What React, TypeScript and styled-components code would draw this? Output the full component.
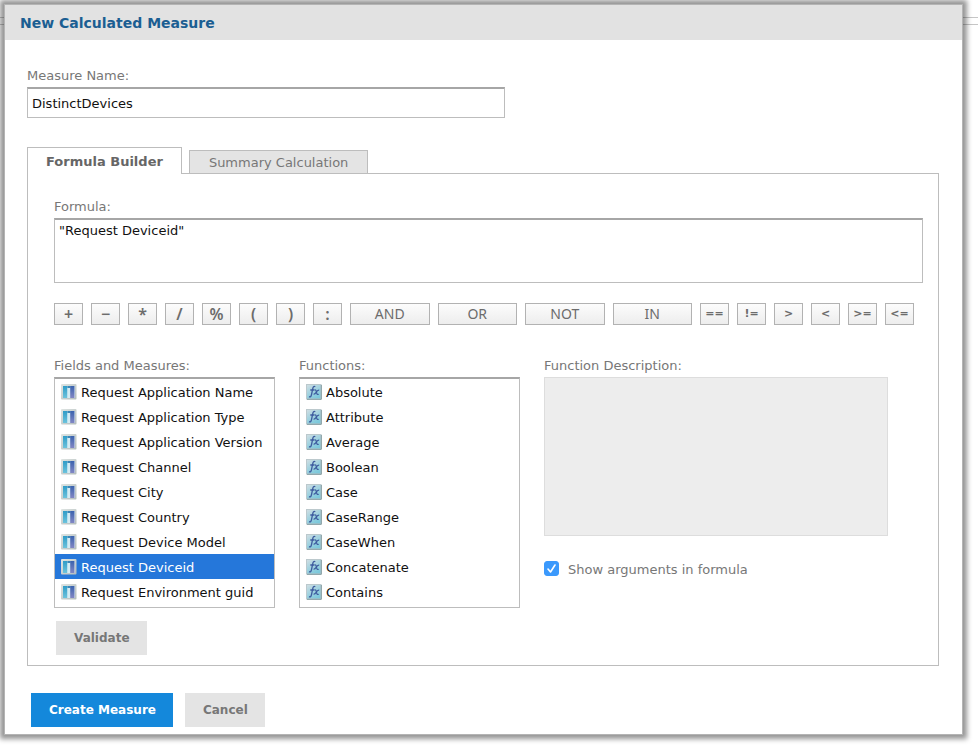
import React, { useState } from "react";
import styled, { createGlobalStyle, css } from "styled-components";

const GlobalStyle = createGlobalStyle`
  *, *::before, *::after { box-sizing: border-box; }
  body { margin: 0; background: #fff; }
  body, button, input, textarea {
    font-family: "DejaVu Sans", Verdana, sans-serif;
    font-size: 13px;
  }
`;

const Page = styled.div`
  position: relative;
  min-height: 100vh;
  padding: 5px 16px 12px 5px;
  overflow: hidden;
`;

const BackgroundRail = styled.div`
  position: absolute;
  top: 17px;
  left: 0;
  right: 0;
  height: 8px;
  border-top: 1px solid #c6c6c6;
  border-bottom: 1px solid #c6c6c6;
`;

const Dialog = styled.section`
  position: relative;
  background: #fff;
  box-shadow: 0 0 0 1px #b4b4b4, 0 0 5px 5px rgba(0, 0, 0, 0.42);
`;

const DialogHeader = styled.header`
  display: flex;
  align-items: center;
  height: 35px;
  padding: 0 15px;
  background: #e2e2e2;
`;

const Title = styled.h1`
  margin: 0;
  font-size: 14px;
  line-height: 18px;
  color: #1b5e92;
`;

const DialogBody = styled.div`
  padding: 27px 23px 7px 22px;
`;

const FieldLabel = styled.label`
  display: block;
  height: 20px;
  line-height: 18px;
  color: #777;
`;

const boxBorder = css`
  border: 1px solid #bdbdbd;
  border-top: 2px solid #a6a6a6;
  border-radius: 0;
  background: #fff;
`;

const NameInput = styled.input`
  ${boxBorder}
  display: block;
  width: 478px;
  max-width: 100%;
  height: 31px;
  padding: 0 4px;
  color: #111;
  outline: none;
`;

const TabList = styled.div`
  display: flex;
  align-items: flex-end;
  gap: 7px;
  height: 26px;
  margin-top: 29px;
`;

const Tab = styled.button<{ $active: boolean }>`
  position: relative;
  z-index: ${(p) => (p.$active ? 1 : 0)};
  height: ${(p) => (p.$active ? "27px" : "23px")};
  margin-bottom: ${(p) => (p.$active ? "-1px" : "0")};
  padding: ${(p) => (p.$active ? "0 18px" : "0 19px")};
  border: 1px solid #bdbdbd;
  border-bottom: 0;
  background: ${(p) => (p.$active ? "#fff" : "#e4e4e4")};
  color: ${(p) => (p.$active ? "#666" : "#777")};
  font-weight: ${(p) => (p.$active ? "bold" : "normal")};
`;

const Panel = styled.div`
  padding: 24px 15px 10px 26px;
  border: 1px solid #bdbdbd;
`;

const FormulaInput = styled.textarea`
  ${boxBorder}
  display: block;
  width: 100%;
  height: 65px;
  padding: 2px 4px;
  color: #111;
  font-size: 13px;
  line-height: 18px;
  resize: none;
  outline: none;
`;

const Operators = styled.div`
  display: flex;
  gap: 8px;
  margin: 20px 9px 0 0;
`;

const symbolText = css`
  font-family: "Noto Sans", "Lucida Grande", sans-serif;
  font-size: 16px;
  font-weight: 600;
`;

const wordText = css`
  font-family: "Noto Sans", "Lucida Grande", sans-serif;
  font-size: 14px;
  font-weight: 400;
`;

const compareText = css`
  font-size: 11px;
  font-weight: 700;
`;

const OperatorButton = styled.button<{ $kind: "symbol" | "word" | "compare" }>`
  flex: ${(p) => (p.$kind === "word" ? "1 1 0" : "0 0 29px")};
  height: 22px;
  padding: 0;
  border: 1px solid #b2b2b2;
  background: linear-gradient(#fcfcfc, #ededed);
  color: #6c6c6c;
  line-height: 20px;
  ${(p) => ({ symbol: symbolText, word: wordText, compare: compareText })[p.$kind]}
`;

const Columns = styled.div`
  display: grid;
  grid-template-columns: 221px 221px minmax(0, 344px);
  gap: 24px;
  margin-top: 32px;
`;

const List = styled.ul`
  ${boxBorder}
  height: 231px;
  margin: 0;
  padding: 0;
  overflow: hidden;
  list-style: none;
`;

const ListItem = styled.li<{ $selected: boolean }>`
  display: flex;
  align-items: center;
  gap: 4px;
  height: 25px;
  padding-left: 6px;
  background: ${(p) => (p.$selected ? "#2577da" : "transparent")};
  color: ${(p) => (p.$selected ? "#fff" : "#111")};
  white-space: nowrap;
  cursor: default;
`;

const ItemText = styled.span`
  padding-top: 2px;
`;

const Description = styled.div`
  height: 159px;
  border: 1px solid #ddd;
  background: #ededed;
`;

const CheckRow = styled.label`
  display: flex;
  align-items: center;
  gap: 8px;
  margin-top: 23px;
  line-height: 18px;
  color: #777;
`;

const CheckHolder = styled.span`
  display: grid;
  width: 16px;
  height: 16px;
  > * { grid-area: 1 / 1; }
  > svg { pointer-events: none; }
`;

const CheckInput = styled.input`
  appearance: none;
  width: 15px;
  height: 15px;
  margin: 0;
  border: 1px solid #3b99fc;
  border-radius: 3px;
  background: #fff;
  &:checked { background: #3b99fc; }
  &:not(:checked) + svg { display: none; }
`;

const ActionButton = styled.button<{ $primary?: boolean }>`
  height: 34px;
  padding: 0 17px 0 18px;
  border: 0;
  background: ${(p) => (p.$primary ? "#1488db" : "#e4e4e4")};
  color: ${(p) => (p.$primary ? "#fff" : "#777")};
  font-size: 12px;
  font-weight: bold;
`;

const ValidateRow = styled.div`
  margin: 13px 0 0 2px;
`;

const Footer = styled.footer`
  display: flex;
  gap: 12px;
  margin: 27px 0 0 4px;
`;

function FieldIcon() {
  return (
    <svg width="16" height="16" viewBox="0 0 16 16" aria-hidden="true">
      <defs>
        <linearGradient id="field-frame" x2="1" y2="1">
          <stop stopColor="#dfe5e3" />
          <stop offset="1" stopColor="#b3bcbc" />
        </linearGradient>
        <linearGradient id="field-left" x2="0" y2="1">
          <stop stopColor="#2f9cc8" />
          <stop offset="1" stopColor="#6cc3dc" />
        </linearGradient>
        <linearGradient id="field-right" x2="0" y2="1">
          <stop stopColor="#3a62ae" />
          <stop offset="1" stopColor="#8387c4" />
        </linearGradient>
      </defs>
      <rect width="15.5" height="15.5" rx="1" fill="url(#field-frame)" />
      <rect x="2" y="2" width="12" height="12" fill="#dff0f5" />
      <rect x="2" y="2" width="4.5" height="12" fill="url(#field-left)" />
      <rect x="6.5" y="2" width="3" height="2" fill="#3b87b8" />
      <rect x="6.5" y="4" width="3" height="10" fill="#d3ecf4" />
      <rect x="9.2" y="2" width="4.3" height="12" fill="url(#field-right)" />
    </svg>
  );
}

function FunctionIcon() {
  return (
    <svg width="16" height="16" viewBox="0 0 16 16" fill="none" aria-hidden="true">
      <defs>
        <linearGradient id="fx-fill" x2="0.6" y2="1">
          <stop stopColor="#d3dfe3" />
          <stop offset="0.5" stopColor="#a5d3e0" />
          <stop offset="1" stopColor="#7cc9dc" />
        </linearGradient>
      </defs>
      <rect x="0.5" y="0.5" width="14.5" height="14.5" fill="url(#fx-fill)" stroke="#bcc9cd" />
      <path d="M15.3 1v14.3H1" stroke="#80999f" />
      <path d="M9.3 2.7C7.6 1.8 7 3.3 6.6 5.3L5.500 10.7C5.1 12.7 4.3 13.3 3 12.7M4.3 6h4" stroke="#3d5b9e" strokeWidth="1.3" />
      <path d="M8.5 6c1.5-.5 1.5.6 2 2.4.4 1.7.8 2.5 2.2 1.9M13.2 6.1c-1.5-.2-2 .8-2.9 2-.8 1.3-1.3 2.3-2.7 2" stroke="#3d5b9e" strokeWidth="1.2" />
    </svg>
  );
}

const SYMBOLS = ["+", "−", "*", "/", "%", "(", ")", ":"];
const WORDS = ["AND", "OR", "NOT", "IN"];
const COMPARISONS = ["==", "!=", ">", "<", ">=", "<="];

const FIELDS = [
  "Request Application Name",
  "Request Application Type",
  "Request Application Version",
  "Request Channel",
  "Request City",
  "Request Country",
  "Request Device Model",
  "Request Deviceid",
  "Request Environment guid",
];

const FUNCTIONS = [
  "Absolute",
  "Attribute",
  "Average",
  "Boolean",
  "Case",
  "CaseRange",
  "CaseWhen",
  "Concatenate",
  "Contains",
];

interface PickListProps {
  id: string;
  label: string;
  items: string[];
  icon: React.ReactNode;
  initial?: string;
}

function PickList({ id, label, items, icon, initial }: PickListProps) {
  const [selected, setSelected] = useState(initial);
  return (
    <div>
      <FieldLabel as="div" id={id}>{label}</FieldLabel>
      <List role="listbox" aria-labelledby={id} tabIndex={0}>
        {items.map((item) => (
          <ListItem
            key={item}
            role="option"
            aria-selected={item === selected}
            $selected={item === selected}
            onClick={() => setSelected(item)}
          >
            {icon}
            <ItemText>{item}</ItemText>
          </ListItem>
        ))}
      </List>
    </div>
  );
}

export default function App() {
  const [formula, setFormula] = useState('"Request Deviceid"');
  const append = (op: string) => setFormula((f) => `${f} ${op} `);

  return (
    <>
      <GlobalStyle />
      <Page>
        <BackgroundRail />
        <Dialog role="dialog" aria-labelledby="dialog-title">
          <DialogHeader>
            <Title id="dialog-title">New Calculated Measure</Title>
          </DialogHeader>
          <DialogBody>
            <FieldLabel htmlFor="measure-name">Measure Name:</FieldLabel>
            <NameInput id="measure-name" defaultValue="DistinctDevices" spellCheck={false} />

            <TabList role="tablist">
              <Tab role="tab" aria-selected $active>Formula Builder</Tab>
              <Tab role="tab" aria-selected={false} $active={false}>Summary Calculation</Tab>
            </TabList>
            <Panel role="tabpanel">
              <FieldLabel htmlFor="formula">Formula:</FieldLabel>
              <FormulaInput
                id="formula"
                value={formula}
                spellCheck={false}
                onChange={(e) => setFormula(e.target.value)}
              />
              <Operators>
                {SYMBOLS.map((op) => (
                  <OperatorButton key={op} $kind="symbol" onClick={() => append(op)}>{op}</OperatorButton>
                ))}
                {WORDS.map((op) => (
                  <OperatorButton key={op} $kind="word" onClick={() => append(op)}>{op}</OperatorButton>
                ))}
                {COMPARISONS.map((op) => (
                  <OperatorButton key={op} $kind="compare" onClick={() => append(op)}>{op}</OperatorButton>
                ))}
              </Operators>

              <Columns>
                <PickList
                  id="fields-label"
                  label="Fields and Measures:"
                  items={FIELDS}
                  icon={<FieldIcon />}
                  initial="Request Deviceid"
                />
                <PickList id="functions-label" label="Functions:" items={FUNCTIONS} icon={<FunctionIcon />} />
                <div>
                  <FieldLabel as="div" id="description-label">Function Description:</FieldLabel>
                  <Description role="region" aria-labelledby="description-label" />
                  <CheckRow>
                    <CheckHolder>
                      <CheckInput type="checkbox" defaultChecked />
                      <svg width="15" height="15" viewBox="0 0 15 15" fill="none" aria-hidden="true">
                        <path d="M4 8l2.5 3L11 4" stroke="#fff" strokeWidth="1.6" strokeLinecap="round" strokeLinejoin="round" />
                      </svg>
                    </CheckHolder>
                    <ItemText>Show arguments in formula</ItemText>
                  </CheckRow>
                </div>
              </Columns>
              <ValidateRow>
                <ActionButton>Validate</ActionButton>
              </ValidateRow>
            </Panel>
            <Footer>
              <ActionButton $primary>Create Measure</ActionButton>
              <ActionButton>Cancel</ActionButton>
            </Footer>
          </DialogBody>
        </Dialog>
      </Page>
    </>
  );
}
